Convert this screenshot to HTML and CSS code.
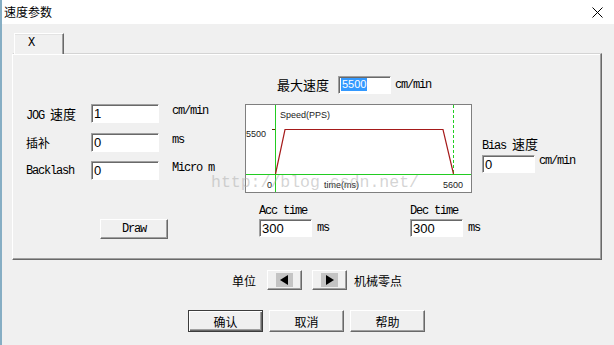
FILE: index.html
```html
<!DOCTYPE html>
<html lang="zh-CN">
<head>
    <meta charset="UTF-8">
    <title>速度参数</title>
    <link rel="stylesheet" href="styles.css">
</head>
<body>
    <div class="dialog">
        <div class="titlebar">
            <span class="title">速度参数</span>
            <svg class="close" width="11" height="11" viewBox="0 0 11 11">
                <path d="M0.5 0.5 L10.5 10.5 M10.5 0.5 L0.5 10.5" stroke="#000" stroke-width="1" fill="none"/>
            </svg>
        </div>

        <div class="content">
            <div class="tabs">
                <div class="tab">X</div>
            </div>

            <div class="panel">
                <div class="max-row">
                    <span class="cn max-label">最大速度</span>
                    <span class="input small"><span class="sel">5500</span></span>
                    <span class="lbl unit">cm/min</span>
                </div>

                <div class="main">
                    <div class="col-left">
                        <div class="fields">
                            <span class="lbl">JOG <span class="cn">速度</span></span>
                            <span class="input">1</span>
                            <span class="lbl unit">cm/min</span>

                            <span class="cn">插补</span>
                            <span class="input">0</span>
                            <span class="lbl unit">ms</span>

                            <span class="lbl">Backlash</span>
                            <span class="input">0</span>
                            <span class="lbl unit">Micro m</span>
                        </div>
                        <button class="btn draw">Draw</button>
                    </div>

                    <div class="col-mid">
                        <svg class="chart" width="227" height="89" viewBox="0 0 227 89">
                            <rect x="0.5" y="0.5" width="226" height="88" fill="#fff" stroke="#7f7f7f"/>
                            <line x1="30.5" y1="1" x2="30.5" y2="88" stroke="#22cc22"/>
                            <line x1="1" y1="70.5" x2="226" y2="70.5" stroke="#22cc22"/>
                            <line x1="208.5" y1="1" x2="208.5" y2="70" stroke="#22cc22" stroke-dasharray="3 2"/>
                            <line x1="27" y1="25.5" x2="30" y2="25.5" stroke="#5a3000"/>
                            <polyline points="30.5,70 40,25.5 198,25.5 208.5,70" fill="none" stroke="#a51a1a" stroke-width="1.2"/>
                            <text x="35" y="14">Speed(PPS)</text>
                            <text x="1" y="33">5500</text>
                            <text x="22" y="84">0</text>
                            <text x="79" y="84">time(ms)</text>
                            <text x="198" y="84">5600</text>
                        </svg>
                        <div class="times">
                            <div class="tgroup acc">
                                <span class="lbl tlabel">Acc time</span>
                                <div class="trow">
                                    <span class="input small">300</span>
                                    <span class="lbl unit">ms</span>
                                </div>
                            </div>
                            <div class="tgroup">
                                <span class="lbl tlabel">Dec time</span>
                                <div class="trow">
                                    <span class="input small">300</span>
                                    <span class="lbl unit">ms</span>
                                </div>
                            </div>
                        </div>
                    </div>

                    <div class="col-right">
                        <span class="lbl tlabel bias">Bias <span class="cn">速度</span></span>
                        <div class="trow">
                            <span class="input small">0</span>
                            <span class="lbl unit top">cm/min</span>
                        </div>
                    </div>
                </div>

                <div class="watermark">http://blog.csdn.net/</div>
            </div>

            <div class="unit-row">
                <span class="cn">单位</span>
                <button class="btn arrow first">
                    <span class="arrow-box">
                        <svg width="9" height="10" viewBox="0 0 9 10"><path d="M8 0 L8 10 L0 5 Z" fill="#000"/></svg>
                    </span>
                </button>
                <button class="btn arrow">
                    <span class="arrow-box">
                        <svg width="9" height="10" viewBox="0 0 9 10"><path d="M1 0 L1 10 L9 5 Z" fill="#000"/></svg>
                    </span>
                </button>
                <span class="cn zero">机械零点</span>
            </div>

            <div class="btn-row">
                <button class="btn cmd default">确认</button>
                <button class="btn cmd">取消</button>
                <button class="btn cmd">帮助</button>
            </div>
        </div>
    </div>
</body>
</html>
```

FILE: styles.css
```css
body {
    margin: 0;
    background: #f0f0f0;
    font-family: "Noto Sans CJK SC", sans-serif;
    color: #000;
}

.dialog {
    width: 614px;
    height: 345px;
    box-sizing: border-box;
    border-left: 2px solid #86aec4;
    background: #f0f0f0;
    overflow: hidden;
}

.titlebar {
    height: 24px;
    background: #fff;
    display: flex;
    align-items: center;
    padding-left: 2px;
}

.title {
    font-size: 12px;
    line-height: 16px;
}

.close {
    margin-left: auto;
    margin-right: 11px;
    display: block;
}

.content {
    padding: 9px 12px 0 10px;
}

.cn {
    font-family: "Noto Sans CJK SC", sans-serif;
    font-size: 12px;
    letter-spacing: 0;
}

.lbl {
    font-family: "Liberation Mono", "Noto Sans CJK SC", monospace;
    font-size: 12px;
    letter-spacing: -1.2px;
}

.lbl .cn {
    font-size: 13px;
}

/* tab */
.tabs {
    display: flex;
    height: 20px;
}

.tab {
    margin-left: 2px;
    width: 50px;
    height: 21px;
    box-sizing: border-box;
    border-top: 1px solid #fff;
    border-left: 1px solid #fff;
    border-right: 1px solid #696969;
    box-shadow: inset -1px 0 #a0a0a0, inset 0 1px #e3e3e3;
    background: #f0f0f0;
    position: relative;
    z-index: 1;
    padding-left: 13px;
    font-family: "Liberation Mono", monospace;
    font-size: 12px;
    line-height: 19px;
}

.panel {
    position: relative;
    height: 207px;
    box-sizing: border-box;
    border-top: 1px solid #d4d4d4;
    border-left: 1px solid #fff;
    border-right: 1px solid #696969;
    border-bottom: 1px solid #696969;
    box-shadow: inset -1px -1px #a0a0a0, inset 0 1px #fff;
}

/* inputs */
.input {
    display: flex;
    align-items: center;
    box-sizing: border-box;
    height: 19px;
    background: #fff;
    border-top: 1px solid #a0a0a0;
    border-left: 1px solid #a0a0a0;
    border-right: 1px solid #fff;
    border-bottom: 1px solid #fff;
    box-shadow: inset 1px 1px #696969;
    padding-left: 2px;
    font-family: "Liberation Sans", sans-serif;
    font-size: 13px;
}

.input.small {
    width: 53px;
    height: 18px;
}

.sel {
    background: #3399ff;
    color: #fff;
    font-size: 11px;
    line-height: 13px;
    padding: 0 1px;
}

.max-row {
    display: flex;
    align-items: center;
    height: 19px;
    margin-top: 21px;
    padding-left: 264px;
}

.max-label {
    width: 61px;
    font-size: 13px;
}

.max-row .unit {
    margin-left: 4px;
}

.main {
    display: flex;
    margin-top: 10px;
}

.col-left {
    flex: none;
    width: 232px;
    box-sizing: border-box;
    padding-left: 13px;
    display: flex;
    flex-direction: column;
    align-items: flex-start;
}

.fields {
    display: grid;
    grid-template-columns: 65px 68px auto;
    grid-auto-rows: 19px;
    row-gap: 9.5px;
    align-items: center;
}

.fields .unit {
    align-self: start;
    padding-left: 13px;
    line-height: 14px;
}

.btn {
    background: #f0f0f0;
    box-sizing: border-box;
    border-top: 1px solid #fff;
    border-left: 1px solid #fff;
    border-right: 1px solid #696969;
    border-bottom: 1px solid #696969;
    box-shadow: inset -1px -1px #a0a0a0;
    padding: 0;
    color: #000;
}

.draw {
    margin-top: 39px;
    margin-left: 74px;
    width: 68px;
    height: 20px;
    font-family: "Liberation Mono", monospace;
    font-size: 12px;
    letter-spacing: -1.2px;
}

.col-mid {
    flex: none;
    width: 237px;
}

.chart {
    display: block;
}

.chart text {
    font-family: "Liberation Sans", sans-serif;
    font-size: 9px;
    fill: #222;
}

.times {
    display: flex;
    margin-top: 10px;
}

.tgroup {
    display: flex;
    flex-direction: column;
}

.tgroup.acc {
    margin-left: 14px;
    width: 151px;
}

.tlabel {
    line-height: 16px;
}

.trow {
    display: flex;
    align-items: center;
}

.trow .unit {
    margin-left: 5px;
}

.trow .unit.top {
    align-self: flex-start;
    line-height: 12px;
    margin-left: 4px;
}

.col-right {
    padding-top: 31px;
    display: flex;
    flex-direction: column;
}

.bias {
    line-height: 18px;
}

/* csdn watermark lies over the chart */
.watermark {
    position: absolute;
    left: 198px;
    top: 119px;
    font-family: "Liberation Mono", monospace;
    font-size: 16.5px;
    line-height: 20px;
    color: rgba(170, 170, 170, 0.5);
    pointer-events: none;
}

/* bottom rows */
.unit-row {
    display: flex;
    align-items: center;
    height: 20px;
    margin-top: 10px;
    padding-left: 220px;
}

.arrow {
    width: 35px;
    height: 20px;
    display: flex;
    align-items: center;
    justify-content: center;
}

.arrow.first {
    margin-left: 11px;
    margin-right: 10px;
}

.arrow-box {
    width: 17px;
    height: 14px;
    background: #c4c4c4;
    display: flex;
    align-items: center;
    justify-content: center;
}

.arrow-box svg {
    display: block;
}

.zero {
    margin-left: 7px;
}

.btn-row {
    display: flex;
    margin-top: 20px;
    padding-left: 176px;
    gap: 6px;
}

.cmd {
    width: 75px;
    height: 22px;
    font-family: "Noto Sans CJK SC", sans-serif;
    font-size: 12px;
}

.cmd.default {
    border: 1px solid #3c3c3c;
    box-shadow: inset 1px 1px #fff, inset -1px -1px #696969, inset -2px -2px #a0a0a0;
}
```
